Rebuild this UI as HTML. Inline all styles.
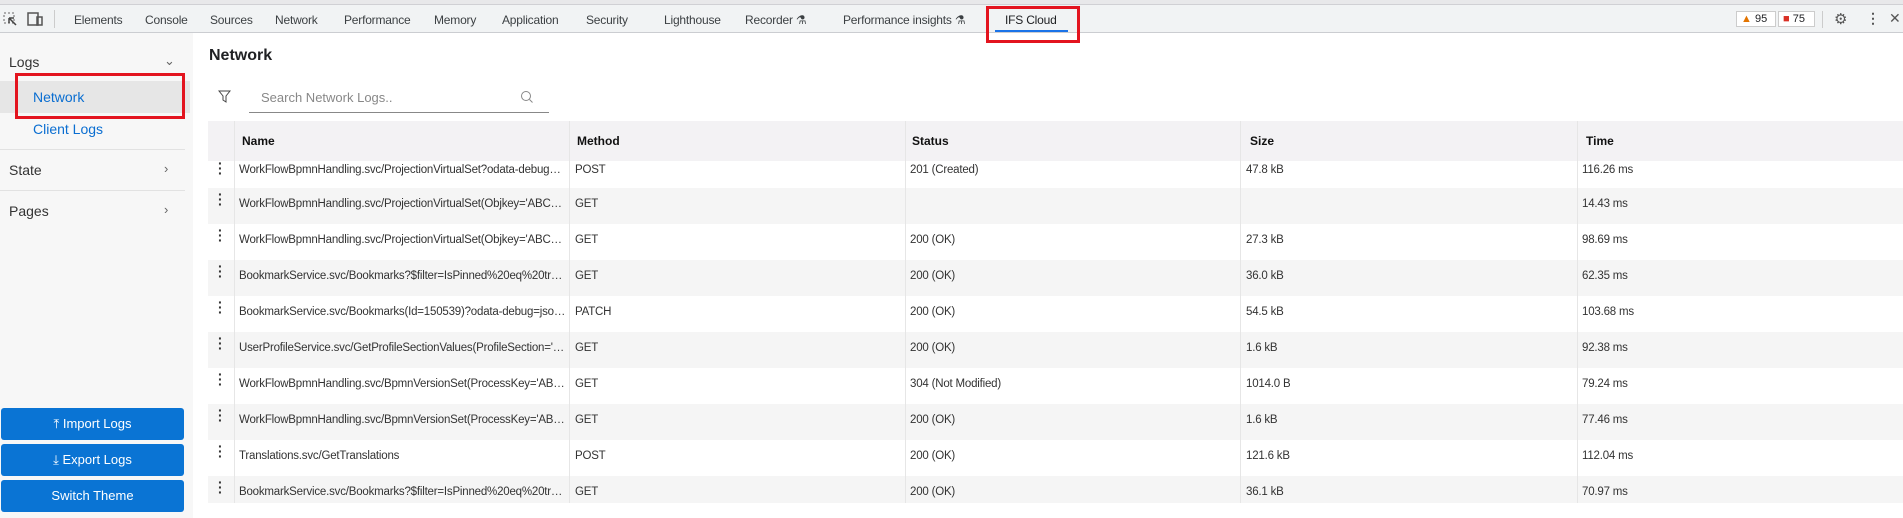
<!DOCTYPE html>
<html><head><meta charset="utf-8"><style>
*{box-sizing:border-box;margin:0;padding:0}
body{width:1903px;height:518px;overflow:hidden;background:#fff;font-family:"Liberation Sans",sans-serif;color:#202124;position:relative}
.abs{position:absolute}
.top{left:0;top:0;width:1903px;height:5px;background:#e8e8ea;border-bottom:1px solid #d0d0d4}
.tabbar{left:0;top:5px;width:1903px;height:28px;background:#f1f3f4;border-bottom:1px solid #cbcdd1}
.tab{position:absolute;top:8px;font-size:12px;color:#3c4043;white-space:nowrap;letter-spacing:-0.2px}
.side{left:0;top:33px;width:193px;height:485px;background:#f7f7f7}
.si{position:absolute;font-size:14px;color:#333}
.chev{position:absolute;left:164px;font-size:13px;color:#666}
.div{position:absolute;left:0;width:185px;height:1px;background:#e2e2e2}
.btn{position:absolute;left:1px;width:183px;height:32px;background:#0a74d4;border-radius:3px;color:#fff;font-size:13px;text-align:center;line-height:32px}
.hdr{left:208px;top:121px;width:1695px;height:40px;background:#f3f2f4}
.hc{position:absolute;top:134px;font-size:12px;font-weight:bold;color:#111}
.row{position:absolute;left:208px;width:1695px;height:36px}
.row.g{background:#f5f5f5}
.c{position:absolute;top:10px;font-size:11.5px;color:#333;white-space:nowrap;overflow:hidden;text-overflow:ellipsis;letter-spacing:-0.2px}
.n{left:31px;width:327px}
.dots{position:absolute;left:10px;top:4px;font-size:14px;font-weight:bold;color:#333;line-height:5px;width:4px}
.vl{position:absolute;top:121px;width:1px;height:382px;background:#e6e6e6}
</style></head><body>
<div class="abs top"></div>
<div class="abs tabbar">
<svg class="abs" style="left:3px;top:7px" width="14" height="14"><rect x="1" y="1" width="10" height="10" fill="none" stroke="#666" stroke-dasharray="2 2"/><path d="M6 6l7 7M6 6v5M6 6h5" stroke="#444" stroke-width="1.5" fill="none"/></svg>
<svg class="abs" style="left:27px;top:7px" width="16" height="14"><rect x="1" y="1" width="10" height="12" fill="none" stroke="#555" stroke-width="1.5"/><rect x="10" y="5" width="5" height="8" fill="none" stroke="#555" stroke-width="1.5"/></svg>
<div class="abs" style="left:54px;top:5px;width:1px;height:18px;background:#ccc"></div>
<span class="tab" style="left:74px">Elements</span>
<span class="tab" style="left:145px">Console</span>
<span class="tab" style="left:210px">Sources</span>
<span class="tab" style="left:275px">Network</span>
<span class="tab" style="left:344px">Performance</span>
<span class="tab" style="left:434px">Memory</span>
<span class="tab" style="left:502px">Application</span>
<span class="tab" style="left:586px">Security</span>
<span class="tab" style="left:664px">Lighthouse</span>
<span class="tab" style="left:745px">Recorder ⚗</span>
<span class="tab" style="left:843px">Performance insights ⚗</span>
<span class="tab" style="left:1005px;color:#202124">IFS Cloud</span>
<div class="abs" style="left:995px;top:25px;width:73px;height:2px;background:#1a73e8"></div>
<div class="abs" style="left:1736px;top:6px;width:40px;height:16px;border:1px solid #ccc;background:#fff;font-size:11px;line-height:14px;padding-left:4px"><span style="color:#e37400">▲</span> 95</div>
<div class="abs" style="left:1778px;top:6px;width:37px;height:16px;border:1px solid #ccc;background:#fff;font-size:11px;line-height:14px;padding-left:4px"><span style="color:#d93025">■</span> 75</div>
<div class="abs" style="left:1822px;top:6px;width:1px;height:17px;background:#ccc"></div>
<span class="tab" style="left:1834px;top:5px;font-size:15px;color:#555">⚙</span>
<span class="tab" style="left:1866px;top:5px;font-size:14px;font-weight:bold;color:#555">⋮</span>
<span class="tab" style="left:1889px;top:5px;font-size:14px;color:#555">✕</span>
</div>
<div class="abs" style="left:986px;top:6px;width:94px;height:37px;border:3px solid #e3141f"></div>

<div class="abs side">
<span class="si" style="left:9px;top:21px">Logs</span><span class="chev" style="top:20px">⌄</span>
<div class="abs" style="left:0;top:48px;width:190px;height:32px;background:#e6e6e6"></div>
<span class="si" style="left:33px;top:56px;color:#0a6ed1">Network</span>
<span class="si" style="left:33px;top:88px;color:#0a6ed1">Client Logs</span>
<div class="div" style="top:116px"></div>
<span class="si" style="left:9px;top:129px">State</span><span class="chev" style="top:128px">›</span>
<div class="div" style="top:157px"></div>
<span class="si" style="left:9px;top:170px">Pages</span><span class="chev" style="top:169px">›</span>
<div class="btn" style="top:375px">⤒ Import Logs</div>
<div class="btn" style="top:411px">⤓ Export Logs</div>
<div class="btn" style="top:447px">Switch Theme</div>
</div>
<div class="abs" style="left:15px;top:73px;width:170px;height:46px;border:3px solid #e3141f"></div>

<div class="abs" style="left:209px;top:47px;font-size:16px;font-weight:bold">Network</div>
<svg class="abs" style="left:218px;top:90px" width="13" height="13"><path d="M1 1h11L8 6v6L5 10V6z" fill="none" stroke="#444"/></svg>
<div class="abs" style="left:249px;top:82px;width:300px;height:31px;border-bottom:1px solid #888"></div>
<div class="abs" style="left:261px;top:90px;font-size:13px;color:#888">Search Network Logs..</div>
<svg class="abs" style="left:520px;top:90px" width="14" height="14"><circle cx="6" cy="6" r="4.5" fill="none" stroke="#888"/><path d="M9.5 9.5l3 3" stroke="#888"/></svg>

<div class="row" style="top:152px"><span class="dots" style="top:9px">·<br>·<br>·</span><span class="c n" style="top:12px">WorkFlowBpmnHandling.svc/ProjectionVirtualSet?odata-debug=json&amp;x=1</span><span class="c" style="left:367px;top:12px">POST</span><span class="c" style="left:702px;top:12px">201 (Created)</span><span class="c" style="left:1038px;top:12px">47.8 kB</span><span class="c" style="left:1374px;top:12px">116.26 ms</span></div>
<div class="row g" style="top:188px"><span class="dots">·<br>·<br>·</span><span class="c n">WorkFlowBpmnHandling.svc/ProjectionVirtualSet(Objkey='ABCDEF12345')</span><span class="c" style="left:367px">GET</span><span class="c" style="left:1374px">14.43 ms</span></div>
<div class="row" style="top:224px"><span class="dots">·<br>·<br>·</span><span class="c n">WorkFlowBpmnHandling.svc/ProjectionVirtualSet(Objkey='ABCDEF12345')</span><span class="c" style="left:367px">GET</span><span class="c" style="left:702px">200 (OK)</span><span class="c" style="left:1038px">27.3 kB</span><span class="c" style="left:1374px">98.69 ms</span></div>
<div class="row g" style="top:260px"><span class="dots">·<br>·<br>·</span><span class="c n">BookmarkService.svc/Bookmarks?$filter=IsPinned%20eq%20true%20and%20x</span><span class="c" style="left:367px">GET</span><span class="c" style="left:702px">200 (OK)</span><span class="c" style="left:1038px">36.0 kB</span><span class="c" style="left:1374px">62.35 ms</span></div>
<div class="row" style="top:296px"><span class="dots">·<br>·<br>·</span><span class="c n">BookmarkService.svc/Bookmarks(Id=150539)?odata-debug=json&amp;more=1</span><span class="c" style="left:367px">PATCH</span><span class="c" style="left:702px">200 (OK)</span><span class="c" style="left:1038px">54.5 kB</span><span class="c" style="left:1374px">103.68 ms</span></div>
<div class="row g" style="top:332px"><span class="dots">·<br>·<br>·</span><span class="c n">UserProfileService.svc/GetProfileSectionValues(ProfileSection='ABC')</span><span class="c" style="left:367px">GET</span><span class="c" style="left:702px">200 (OK)</span><span class="c" style="left:1038px">1.6 kB</span><span class="c" style="left:1374px">92.38 ms</span></div>
<div class="row" style="top:368px"><span class="dots">·<br>·<br>·</span><span class="c n">WorkFlowBpmnHandling.svc/BpmnVersionSet(ProcessKey='ABCDEF1234')</span><span class="c" style="left:367px">GET</span><span class="c" style="left:702px">304 (Not Modified)</span><span class="c" style="left:1038px">1014.0 B</span><span class="c" style="left:1374px">79.24 ms</span></div>
<div class="row g" style="top:404px"><span class="dots">·<br>·<br>·</span><span class="c n">WorkFlowBpmnHandling.svc/BpmnVersionSet(ProcessKey='ABCDEF1234')</span><span class="c" style="left:367px">GET</span><span class="c" style="left:702px">200 (OK)</span><span class="c" style="left:1038px">1.6 kB</span><span class="c" style="left:1374px">77.46 ms</span></div>
<div class="row" style="top:440px"><span class="dots">·<br>·<br>·</span><span class="c n">Translations.svc/GetTranslations</span><span class="c" style="left:367px">POST</span><span class="c" style="left:702px">200 (OK)</span><span class="c" style="left:1038px">121.6 kB</span><span class="c" style="left:1374px">112.04 ms</span></div>
<div class="row g" style="top:476px;height:27px"><span class="dots">·<br>·<br>·</span><span class="c n">BookmarkService.svc/Bookmarks?$filter=IsPinned%20eq%20true%20and%20x</span><span class="c" style="left:367px">GET</span><span class="c" style="left:702px">200 (OK)</span><span class="c" style="left:1038px">36.1 kB</span><span class="c" style="left:1374px">70.97 ms</span></div>

<div class="abs hdr"></div>
<span class="hc" style="left:242px">Name</span>
<span class="hc" style="left:577px">Method</span>
<span class="hc" style="left:912px">Status</span>
<span class="hc" style="left:1250px">Size</span>
<span class="hc" style="left:1586px">Time</span>
<div class="vl" style="left:234px"></div>
<div class="vl" style="left:569px"></div>
<div class="vl" style="left:905px"></div>
<div class="vl" style="left:1240px"></div>
<div class="vl" style="left:1577px"></div>
</body></html>
